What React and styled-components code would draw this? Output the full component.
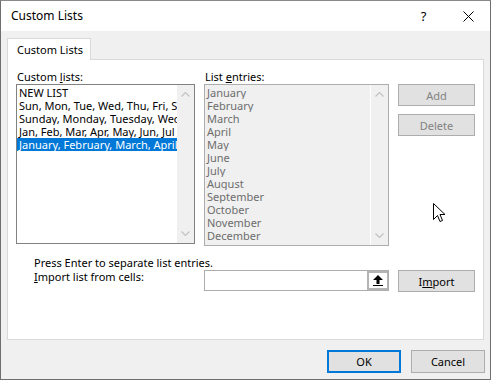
import React from 'react';
import styled, { createGlobalStyle } from 'styled-components';

const GlobalStyle = createGlobalStyle`
    html, body {
        margin: 0;
        padding: 0;
        background: #ffffff;
    }
    body {
        font-family: "Noto Sans", "Liberation Sans", sans-serif;
        font-size: 11px;
        color: #000000;
    }
`;

const customLists = [
    'NEW LIST',
    'Sun, Mon, Tue, Wed, Thu, Fri, Sat',
    'Sunday, Monday, Tuesday, Wednesday',
    'Jan, Feb, Mar, Apr, May, Jun, Jul',
    'January, February, March, April',
];

const months = [
    'January', 'February', 'March', 'April', 'May', 'June',
    'July', 'August', 'September', 'October', 'November', 'December',
];

const Chevron = ({ down }) => (
    <svg width="9" height="6" viewBox="0 0 9 6">
        <path
            d={down ? 'M0.5 0.5 L4.5 4.5 L8.5 0.5' : 'M0.5 5.5 L4.5 1.5 L8.5 5.5'}
            fill="none"
            stroke="#c2c2c2"
            strokeWidth="1.2"
        />
    </svg>
);

const App = () => {
    return (
        <>
            <GlobalStyle />
            <Window>
                <TitleBar>
                    <Title>Custom Lists</Title>
                    <CaptionButton>?</CaptionButton>
                    <CaptionButton>
                        <svg width="11" height="11" viewBox="0 0 11 11">
                            <path d="M0.5 0.5 L10.5 10.5 M10.5 0.5 L0.5 10.5" stroke="#000" strokeWidth="1" />
                        </svg>
                    </CaptionButton>
                </TitleBar>
                <Body>
                    <TabStrip>
                        <Tab>Custom Lists</Tab>
                    </TabStrip>
                    <Panel>
                        <ListsGrid>
                            <Field>
                                <Label>Custom <u>l</u>ists:</Label>
                                <ListBox $height={160}>
                                    <Items>
                                        {customLists.map((item, i) => (
                                            <Item key={item} $selected={i === customLists.length - 1}>{item}</Item>
                                        ))}
                                    </Items>
                                    <ScrollBar>
                                        <Chevron />
                                        <Chevron down />
                                    </ScrollBar>
                                </ListBox>
                            </Field>
                            <Field>
                                <Label>List <u>e</u>ntries:</Label>
                                <ListBox $height={162} $disabled>
                                    <Items>
                                        {months.map(month => (
                                            <Item key={month} $disabled>{month}</Item>
                                        ))}
                                    </Items>
                                    <ScrollBar $disabled>
                                        <Chevron />
                                        <Chevron down />
                                    </ScrollBar>
                                </ListBox>
                            </Field>
                            <Actions>
                                <Button $disabled>Add</Button>
                                <Button $disabled>Delete</Button>
                            </Actions>
                        </ListsGrid>
                        <Hint>Press Enter to separate list entries.</Hint>
                        <ImportRow>
                            <ImportLabel><u>I</u>mport list from cells:</ImportLabel>
                            <RangeInput>
                                <RangeField />
                                <CollapseButton>
                                    <svg width="10" height="11" viewBox="0 0 10 11">
                                        <path d="M5 0 L10 5 L6.5 5 L6.5 9 L3.5 9 L3.5 5 L0 5 Z" fill="#000" />
                                        <rect x="0" y="10" width="10" height="1" fill="#000" />
                                    </svg>
                                </CollapseButton>
                            </RangeInput>
                            <Button>I<u>m</u>port</Button>
                        </ImportRow>
                        <Cursor>
                            <svg width="13" height="20" viewBox="0 0 13 20">
                                <path
                                    d="M0.5 0.5 L0.5 16.5 L4.5 12.5 L7 18.5 L9.5 17.5 L7 11.5 L12 11.5 Z"
                                    fill="#ffffff"
                                    stroke="#000000"
                                    strokeWidth="1"
                                    strokeLinejoin="miter"
                                />
                            </svg>
                        </Cursor>
                    </Panel>
                    <Footer>
                        <DialogButton $default>OK</DialogButton>
                        <DialogButton>Cancel</DialogButton>
                    </Footer>
                </Body>
            </Window>
        </>
    );
};

const Window = styled.div`
    width: 491px;
    height: 380px;
    box-sizing: border-box;
    border: 1px solid #6f6f6f;
    border-top: 1px solid #8a8a8a;
    background: #f0f0f0;
    display: flex;
    flex-direction: column;
`;

const TitleBar = styled.div`
    height: 30px;
    background: #ffffff;
    display: flex;
    align-items: center;
    padding-left: 10px;
`;

const Title = styled.div`
    flex: 1;
    font-size: 12px;
    padding-bottom: 1px;
`;

const CaptionButton = styled.div`
    width: 45px;
    height: 30px;
    display: flex;
    align-items: center;
    justify-content: center;
    font-size: 13px;
    &:last-child {
        width: 44px;
    }
`;

const Body = styled.div`
    flex: 1;
    padding: 7px 6px 0 6px;
    display: flex;
    flex-direction: column;
`;

const TabStrip = styled.div`
    display: flex;
    height: 21px;
`;

const Tab = styled.div`
    width: 84px;
    height: 22px;
    box-sizing: border-box;
    background: #ffffff;
    border: 1px solid #d9d9d9;
    border-bottom: none;
    display: flex;
    align-items: center;
    padding-left: 9px;
    position: relative;
    z-index: 1;
`;

const Panel = styled.div`
    position: relative;
    width: 477px;
    height: 281px;
    box-sizing: border-box;
    background: #ffffff;
    border: 1px solid #d9d9d9;
    padding: 10px 0 0 8px;
`;

const ListsGrid = styled.div`
    display: grid;
    grid-template-columns: 179px 185px 77px;
    column-gap: 9px;
    align-items: start;
`;

const Field = styled.div`
    display: flex;
    flex-direction: column;
`;

const Label = styled.div`
    height: 14px;
    line-height: 13px;
    padding-left: 1px;
    u {
        text-underline-offset: 1px;
    }
`;

const ListBox = styled.div`
    height: ${p => p.$height}px;
    box-sizing: border-box;
    border: 1px solid ${p => (p.$disabled ? '#adadad' : '#828282')};
    background: ${p => (p.$disabled ? '#f0f0f0' : '#ffffff')};
    display: flex;
    overflow: hidden;
`;

const Items = styled.div`
    flex: 1;
    min-width: 0;
    padding-top: 1px;
`;

const Item = styled.div`
    height: 13px;
    line-height: 13px;
    padding-left: 2px;
    white-space: nowrap;
    overflow: hidden;
    background: ${p => (p.$selected ? '#0078d7' : 'transparent')};
    color: ${p => (p.$selected ? '#ffffff' : p.$disabled ? '#6d6d6d' : '#000000')};
`;

const ScrollBar = styled.div`
    width: 17px;
    background: #f0f0f0;
    border-left: ${p => (p.$disabled ? '1px solid #ffffff' : 'none')};
    display: flex;
    flex-direction: column;
    justify-content: space-between;
    align-items: center;
    padding: 6px 0 6px;
`;

const Actions = styled.div`
    display: flex;
    flex-direction: column;
    gap: 8px;
    padding-top: 14px;
`;

const Button = styled.div`
    width: 77px;
    height: 22px;
    box-sizing: border-box;
    border: 1px solid #adadad;
    background: #e1e1e1;
    color: ${p => (p.$disabled ? '#838383' : '#000000')};
    display: flex;
    align-items: center;
    justify-content: center;
    u {
        text-underline-offset: 1px;
    }
`;

const Hint = styled.div`
    margin-top: 9px;
    padding-left: 18px;
    height: 15px;
    line-height: 15px;
`;

const ImportRow = styled.div`
    display: flex;
    align-items: flex-start;
    padding-left: 18px;
`;

const ImportLabel = styled.div`
    width: 170px;
    line-height: 13px;
    u {
        text-underline-offset: 1px;
    }
`;

const RangeInput = styled.div`
    width: 185px;
    height: 21px;
    box-sizing: border-box;
    border: 1px solid #adadad;
    background: #ffffff;
    display: flex;
    margin-right: 9px;
`;

const RangeField = styled.div`
    flex: 1;
`;

const CollapseButton = styled.div`
    width: 21px;
    height: 19px;
    box-sizing: border-box;
    border: 2px solid #b4b4b4;
    border-right-width: 1px;
    background: #ffffff;
    display: flex;
    align-items: center;
    justify-content: center;
`;

const Cursor = styled.div`
    position: absolute;
    left: 425px;
    top: 143px;
    line-height: 0;
`;

const Footer = styled.div`
    display: flex;
    justify-content: flex-end;
    gap: 10px;
    padding: 10px 0 0 0;
    margin-right: -1px;
`;

const DialogButton = styled.div`
    width: 74px;
    height: 23px;
    box-sizing: border-box;
    border: ${p => (p.$default ? '2px solid #0078d7' : '1px solid #adadad')};
    background: #e1e1e1;
    display: flex;
    align-items: center;
    justify-content: center;
`;

export default App;
